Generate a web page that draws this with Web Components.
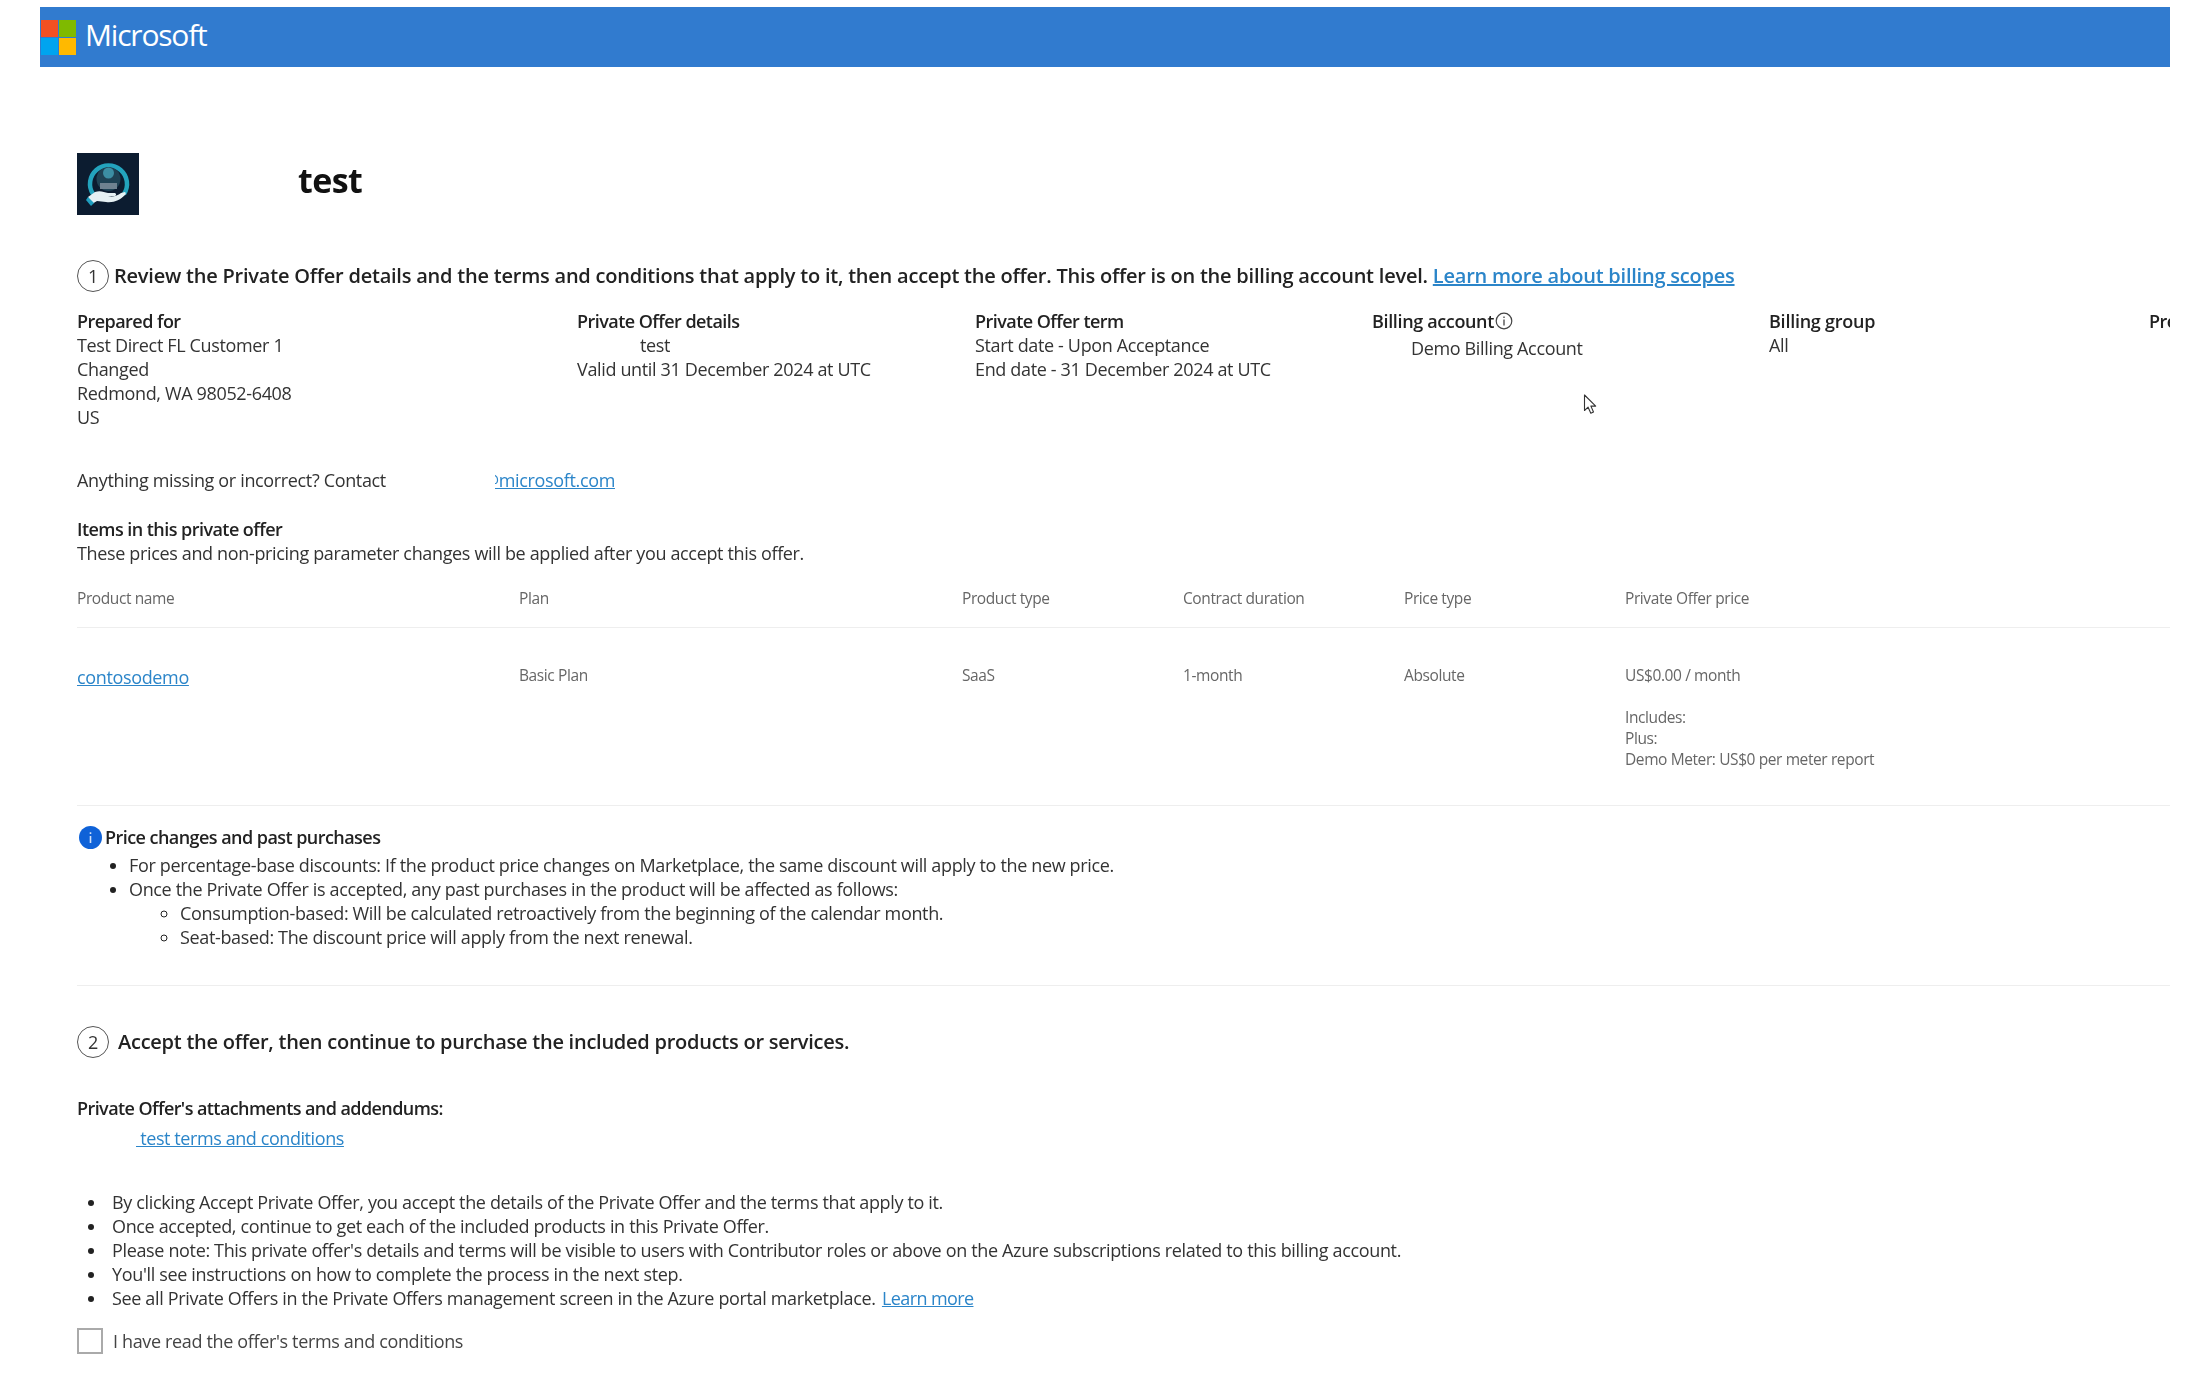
<!DOCTYPE html>
<html>
<head>
<meta charset="utf-8">
<style>
  html, body { margin: 0; background: #fff; }
  body {
    font-family: "Open Sans", "Noto Sans", sans-serif;
    font-size: 18px;
    letter-spacing: -0.35px;
    line-height: 24px;
    color: #333;
    overflow: hidden;
    height: 1373px;
  }
  /* the reference is a soft, upscaled capture */
  #page { position: relative; margin: 7px 25px 0 40px; overflow: hidden; filter: blur(0.45px); }
  #content { padding: 0 0 0 37px; }
  #cursor { position: absolute; left: 1543px; top: 387px; }
</style>
</head>
<body>
<div id="page">
  <ms-header></ms-header>
  <div id="content">
    <offer-title>test</offer-title>
    <step-heading number="1" gap="5" style="margin-top:45px">
      Review the Private Offer details and the terms and conditions that apply to it, then accept the offer. This offer is on the billing account level.
      <a-link>Learn more about billing scopes</a-link>
    </step-heading>
    <offer-details></offer-details>
    <contact-line></contact-line>
    <offer-items></offer-items>
    <price-note></price-note>
    <step-heading number="2" gap="9" style="margin-top:40px;letter-spacing:-0.25px">Accept the offer, then continue to purchase the included products or services.</step-heading>
    <offer-accept></offer-accept>
  </div>
  <svg id="cursor" width="15" height="22" viewBox="0 0 15 22">
    <path d="M1.5 1v15.5l3.6-3.3 2.7 6 2.7-1.2-2.6-5.9h4.8z" fill="#fff" stroke="#333" stroke-width="1.1" stroke-linejoin="round"/>
  </svg>
</div>

<script>
class ALink extends HTMLElement {
  constructor() {
    super();
    this.attachShadow({ mode: "open" });
    this.shadowRoot.innerHTML = `
      <style>
        :host { display: inline; color: #2b85c9; text-decoration: underline; font-weight: inherit; }
      </style>
      <slot></slot>`;
  }
}
customElements.define("a-link", ALink);

class MsHeader extends HTMLElement {
  constructor() {
    super();
    this.attachShadow({ mode: "open" });
    this.shadowRoot.innerHTML = `
      <style>
        :host { display: flex; align-items: center; height: 60px; background: #317bcf; color: #fff; }
        svg { display: block; margin-left: 1px; }
        span { margin-left: 9px; font-size: 30px; font-weight: 500; letter-spacing: -1.2px; line-height: 40px; margin-top: -5px; }
      </style>
      <svg width="35" height="35" viewBox="0 0 35 35">
        <rect width="17" height="17" fill="#f25022"/>
        <rect x="18" width="17" height="17" fill="#7fba00"/>
        <rect y="18" width="17" height="17" fill="#00a4ef"/>
        <rect x="18" y="18" width="17" height="17" fill="#ffb900"/>
      </svg>
      <span>Microsoft</span>`;
  }
}
customElements.define("ms-header", MsHeader);

class OfferTitle extends HTMLElement {
  constructor() {
    super();
    this.attachShadow({ mode: "open" });
    this.shadowRoot.innerHTML = `
      <style>
        :host { display: flex; align-items: flex-start; margin-top: 86px; height: 62px; }
        svg { display: block; }
        h1 { margin: 5px 0 0 159px; font-size: 34px; line-height: 44px; font-weight: 700; color: #111; letter-spacing: -0.6px; }
      </style>
      <svg width="62" height="62" viewBox="0 0 62 62">
        <rect width="62" height="62" fill="#0c1c30"/>
        <path d="M16 41a18.5 18.5 0 1 1 31 0" fill="none" stroke="#23a3bd" stroke-width="4.5"/>
        <circle cx="31.5" cy="26" r="12" fill="#1f4254"/>
        <circle cx="31.5" cy="20" r="5.5" fill="#3c8ea3"/>
        <rect x="23" y="30" width="17" height="6" fill="#6f8290"/>
        <path d="M11 44l7-5c5-2 9 0 13 1h7c2 1 1 3-1 3h-6c5 1 9 0 13-3l4-1c1 1 1 2 0 3-5 5-11 8-19 7l-9-1-5 3z" fill="#e6f1f4"/>
        <path d="M11 44l6 6-3 3-5-6z" fill="#1f9fc0"/>
      </svg>
      <h1><slot></slot></h1>`;
  }
}
customElements.define("offer-title", OfferTitle);

class StepHeading extends HTMLElement {
  constructor() {
    super();
    this.attachShadow({ mode: "open" });
    const gap = this.getAttribute("gap") || "6";
    this.shadowRoot.innerHTML = `
      <style>
        :host { display: flex; align-items: center; height: 32px; font-size: 20px; letter-spacing: -0.22px; font-weight: 600; color: #222; white-space: nowrap; }
        .num {
          flex: none; box-sizing: border-box; width: 32px; height: 32px; border: 1.5px solid #555;
          border-radius: 50%; display: flex; align-items: center; justify-content: center;
          font-weight: 400; font-size: 18px; color: #333; margin-right: ${gap}px;
        }
      </style>
      <span class="num">${this.getAttribute("number")}</span>
      <span><slot></slot></span>`;
  }
}
customElements.define("step-heading", StepHeading);

class DetailColumn extends HTMLElement {
  constructor() {
    super();
    this.attachShadow({ mode: "open" });
    this.shadowRoot.innerHTML = `
      <style>
        :host { display: block; flex: none; white-space: nowrap; }
        .label { font-weight: 600; color: #222; display: flex; align-items: center; letter-spacing: var(--label-spacing, -0.55px); }
      </style>
      <div class="label">${this.getAttribute("label")}<slot name="icon"></slot></div>
      <slot></slot>`;
  }
}
customElements.define("detail-column", DetailColumn);

class OfferDetails extends HTMLElement {
  constructor() {
    super();
    this.attachShadow({ mode: "open" });
    this.shadowRoot.innerHTML = `
      <style>
        :host { display: flex; margin-top: 17px; height: 132px; }
        .indent { padding-left: 63px; }
        .indent2 { padding-left: 39px; margin-top: 3px; }
        svg { display: block; margin-left: 1px; }
      </style>
      <detail-column label="Prepared for" style="width:500px">
        Test Direct FL Customer 1<br>Changed<br>Redmond, WA 98052-6408<br>US
      </detail-column>
      <detail-column label="Private Offer details" style="width:398px">
        <div class="indent">test</div>Valid until 31 December 2024 at UTC
      </detail-column>
      <detail-column label="Private Offer term" style="width:397px">
        Start date - Upon Acceptance<br>End date - 31 December 2024 at UTC
      </detail-column>
      <detail-column label="Billing account" style="width:397px;--label-spacing:-0.36px">
        <svg slot="icon" width="18" height="18" viewBox="0 0 18 18">
          <circle cx="9" cy="9" r="7.8" fill="none" stroke="#444" stroke-width="1.2"/>
          <path d="M9 7.5v6M9 4.5v1.5" stroke="#444" stroke-width="1.3"/>
        </svg>
        <div class="indent2">Demo Billing Account</div>
      </detail-column>
      <detail-column label="Billing group" style="width:380px;--label-spacing:-0.25px">All</detail-column>
      <detail-column label="Prepared by" style="width:100px"></detail-column>`;
  }
}
customElements.define("offer-details", OfferDetails);

class ContactLine extends HTMLElement {
  constructor() {
    super();
    this.attachShadow({ mode: "open" });
    this.shadowRoot.innerHTML = `
      <style>
        :host { display: flex; margin-top: 27px; white-space: nowrap; }
        .who { width: 406px; }
        .mail { position: relative; }
        /* part of the address is masked in the reference */
        .mail::before { content: ""; position: absolute; left: -4px; top: 0; width: 16px; height: 100%; background: #fff; }
      </style>
      <span class="who">Anything missing or incorrect? Contact</span>
      <span class="mail"><a-link>@microsoft.com</a-link></span>`;
  }
}
customElements.define("contact-line", ContactLine);

class OfferItems extends HTMLElement {
  constructor() {
    super();
    this.attachShadow({ mode: "open" });
    this.shadowRoot.innerHTML = `
      <style>
        :host { display: block; margin-top: 25px; }
        .title { font-weight: 600; color: #222; letter-spacing: -0.55px; }
        .row { display: grid; grid-template-columns: 442px 443px 221px 221px 221px 1fr; font-size: 15.5px; letter-spacing: -0.4px; color: #666; }
        .head { margin-top: 21px; padding-bottom: 17px; border-bottom: 1px solid #eee; line-height: 24px; }
        .body { padding: 37px 0 35px; border-bottom: 1px solid #eee; line-height: 21px; }
        .body a-link { font-size: 18px; letter-spacing: -0.35px; position: relative; top: 2px; }
        .body div { line-height: 21px; }
        .sub { margin-top: 21px; }
      </style>
      <div class="title">Items in this private offer</div>
      <div>These prices and non-pricing parameter changes will be applied after you accept this offer.</div>
      <div class="row head">
        <div>Product name</div><div>Plan</div><div>Product type</div><div>Contract duration</div><div>Price type</div><div>Private Offer price</div>
      </div>
      <div class="row body">
        <div><a-link>contosodemo</a-link></div><div>Basic Plan</div><div>SaaS</div><div>1-month</div><div>Absolute</div>
        <div>US$0.00 / month
          <div class="sub">Includes:</div>
          <div>Plus:</div>
          <div>Demo Meter: US$0 per meter report</div>
        </div>
      </div>`;
  }
}
customElements.define("offer-items", OfferItems);

class PriceNote extends HTMLElement {
  constructor() {
    super();
    this.attachShadow({ mode: "open" });
    this.shadowRoot.innerHTML = `
      <style>
        :host { display: block; padding-top: 19px; padding-bottom: 36px; border-bottom: 1px solid #eee; }
        .title { display: flex; align-items: center; font-weight: 600; color: #222; letter-spacing: -0.55px; }
        svg { display: block; margin: 0 3px 0 2px; }
        ul { margin: 4px 0 0; padding: 0 0 0 52px; }
        ul ul { margin: 0; padding-left: 51px; }
        li::marker { color: #222; }
      </style>
      <div class="title">
        <svg width="23" height="23" viewBox="0 0 23 23">
          <circle cx="11.5" cy="11.5" r="11.5" fill="#0f62d8"/>
          <path d="M11.5 10v7M11.5 6.2v1.8" stroke="#cfe0f8" stroke-width="1.6"/>
        </svg>
        Price changes and past purchases
      </div>
      <ul>
        <li>For percentage-base discounts: If the product price changes on Marketplace, the same discount will apply to the new price.</li>
        <li>Once the Private Offer is accepted, any past purchases in the product will be affected as follows:
          <ul>
            <li>Consumption-based: Will be calculated retroactively from the beginning of the calendar month.</li>
            <li>Seat-based: The discount price will apply from the next renewal.</li>
          </ul>
        </li>
      </ul>`;
  }
}
customElements.define("price-note", PriceNote);

class OfferAccept extends HTMLElement {
  constructor() {
    super();
    this.attachShadow({ mode: "open" });
    this.shadowRoot.innerHTML = `
      <style>
        :host { display: block; margin-top: 38px; }
        .title { font-weight: 600; color: #222; letter-spacing: -0.58px; }
        .attach { margin: 6px 0 0 59px; letter-spacing: -0.42px; }
        ul { margin: 40px 0 0; padding: 0 0 0 30px; }
        li { padding-left: 5px; }
        li::marker { color: #222; }
        .more { margin-left: 2px; letter-spacing: -0.6px; }
        label { display: flex; align-items: center; margin-top: 18px; color: #444; }
        .box { box-sizing: border-box; width: 26px; height: 26px; border: 2px solid #aaa; margin-right: 10px; }
      </style>
      <div class="title">Private Offer's attachments and addendums:</div>
      <div class="attach"><a-link>&nbsp;test terms and conditions</a-link></div>
      <ul>
        <li>By clicking Accept Private Offer, you accept the details of the Private Offer and the terms that apply to it.</li>
        <li>Once accepted, continue to get each of the included products in this Private Offer.</li>
        <li>Please note: This private offer's details and terms will be visible to users with Contributor roles or above on the Azure subscriptions related to this billing account.</li>
        <li>You'll see instructions on how to complete the process in the next step.</li>
        <li>See all Private Offers in the Private Offers management screen in the Azure portal marketplace. <a-link class="more">Learn more</a-link></li>
      </ul>
      <label><span class="box"></span>I have read the offer's terms and conditions</label>`;
  }
}
customElements.define("offer-accept", OfferAccept);
</script>
</body>
</html>
